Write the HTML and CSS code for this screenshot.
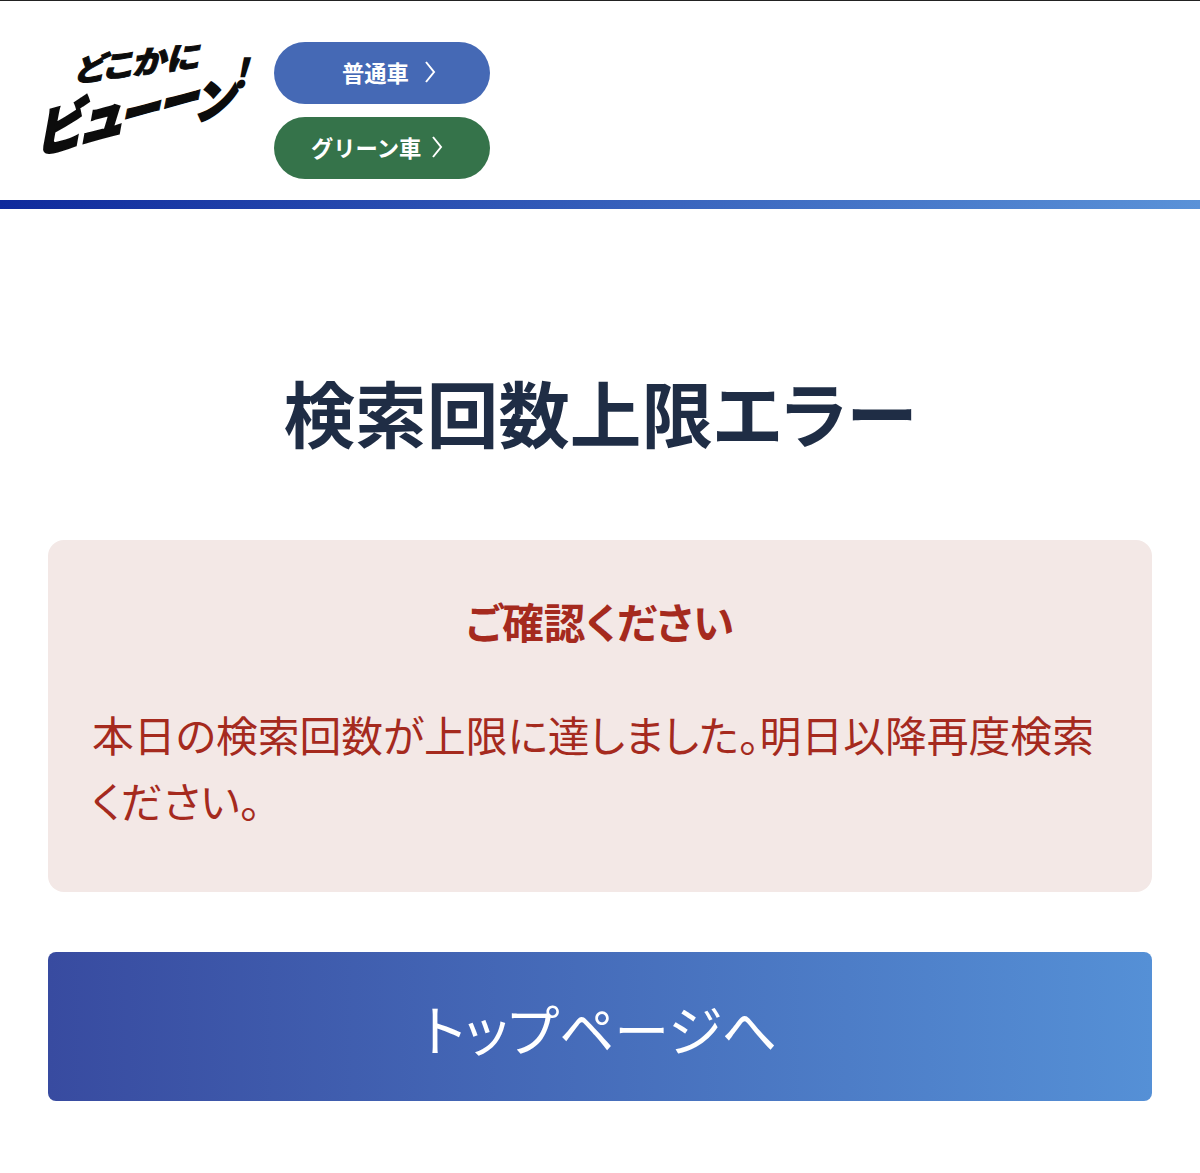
FILE: index.html
```html
<!DOCTYPE html>
<html lang="ja">
<head>
<meta charset="utf-8">
<title>検索回数上限エラー</title>
<link rel="stylesheet" href="styles.css">
</head>
<body>
<header class="site-header">
  <a class="logo" href="#" aria-label="どこかにビューーン!">
    <svg class="logo-svg" width="214" height="125" viewBox="0 0 214 125">
      <text class="logo-small" transform="matrix(0.99 -0.12 -0.2 0.98 38 40)" textLength="126" lengthAdjust="spacingAndGlyphs">どこかに</text>
      <text class="logo-big" transform="matrix(1 -0.27 -0.2 1.1 1 112)" textLength="85" lengthAdjust="spacingAndGlyphs">ビュ</text>
      <text class="logo-bar" transform="matrix(1 -0.27 -0.2 1 84 92)" textLength="78" lengthAdjust="spacingAndGlyphs">ーー</text>
      <text class="logo-n" transform="matrix(1 -0.2 -0.2 1.1 160 78)" textLength="38" lengthAdjust="spacingAndGlyphs">ン</text>
      <text class="logo-mark" transform="matrix(1 0 -0.25 1 196 46)">!</text>
    </svg>
  </a>
  <nav class="car-nav">
    <a class="pill pill-blue" href="#"><span>普通車</span><svg class="chev" width="12" height="24" viewBox="0 0 12 24"><path d="M2 2l8 10-8 10"/></svg></a>
    <a class="pill pill-green" href="#"><span>グリーン車</span><svg class="chev" width="12" height="24" viewBox="0 0 12 24"><path d="M2 2l8 10-8 10"/></svg></a>
  </nav>
</header>
<div class="rule"></div>
<main class="content">
  <h1 class="title">検索回数上限エラー</h1>
  <section class="alert">
    <h2 class="alert-title">ご確認ください</h2>
    <p class="alert-body">本日の検索回数が上限に達しました。明日以降再度検索ください。</p>
  </section>
  <a class="top-link" href="#">トップページへ</a>
</main>
</body>
</html>
```
FILE: styles.css
```css
* { box-sizing: border-box; }
html, body { margin: 0; padding: 0; }
body {
  background: #fff;
  font-family: "Noto Sans CJK JP", "Noto Sans", sans-serif;
  font-feature-settings: "palt";
  height: 1173px;
  overflow: hidden;
}
a { text-decoration: none; }
.site-header {
  height: 200px;
  border-top: 1px solid #222;
  display: flex;
  align-items: flex-start;
  padding: 41px 0 0 36px;
  gap: 24px;
}
.logo { display: block; width: 214px; height: 125px; }
.logo-svg { display: block; overflow: visible; }
.logo-small { font-size: 32px; font-weight: 900; fill: #0c0c0c; stroke: #0c0c0c; stroke-width: 1px; }
.logo-big { font-size: 50px; font-weight: 900; fill: #0c0c0c; stroke: #0c0c0c; stroke-width: 2.4px; }
.logo-bar { font-size: 50px; font-weight: 900; fill: #0c0c0c; stroke: #0c0c0c; stroke-width: 1.4px; }
.logo-n { font-size: 42px; font-weight: 900; fill: #0c0c0c; stroke: #0c0c0c; stroke-width: 2.4px; }
.logo-mark { font-size: 40px; font-weight: 900; fill: #0c0c0c; }
.car-nav { display: flex; flex-direction: column; gap: 13px; }
.pill {
  width: 216px;
  height: 62px;
  border-radius: 31px;
  display: flex;
  align-items: center;
  padding-bottom: 2px;
  color: #fff;
  font-size: 22.3px;
  font-weight: 700;
  font-feature-settings: normal;
}
.pill-blue { background: #4569b5; padding-left: 68px; gap: 15px; }
.pill-green { background: #35734a; padding-left: 37px; gap: 10px; }
.chev { fill: none; stroke: #fff; stroke-width: 2px; }
.rule {
  height: 9px;
  background: linear-gradient(90deg, #0f2a9c 0%, #5a92d8 100%);
}
.content { padding: 0 48px; }
.title {
  margin: 160px 0 0;
  text-align: center;
  font-size: 71.6px;
  line-height: 84px;
  font-weight: 700;
  color: #1f2d45;
}
.alert {
  margin-top: 87px;
  height: 352px;
  padding: 55px 44px 0;
  background: #f3e8e6;
  border-radius: 16px;
  color: #a52a1e;
}
.alert-title {
  margin: 0;
  text-align: center;
  font-size: 41.7px;
  line-height: 52px;
  font-weight: 700;
}
.alert-body {
  margin: 54px 0 0;
  font-size: 41.8px;
  line-height: 66px;
  font-weight: 400;
}
.top-link {
  margin-top: 60px;
  height: 149px;
  display: flex;
  align-items: center;
  justify-content: center;
  border-radius: 8px;
  background: linear-gradient(90deg, #384ba0 0%, #5590d6 100%);
  color: #fff;
  font-size: 55px;
  font-weight: 400;
}
```
